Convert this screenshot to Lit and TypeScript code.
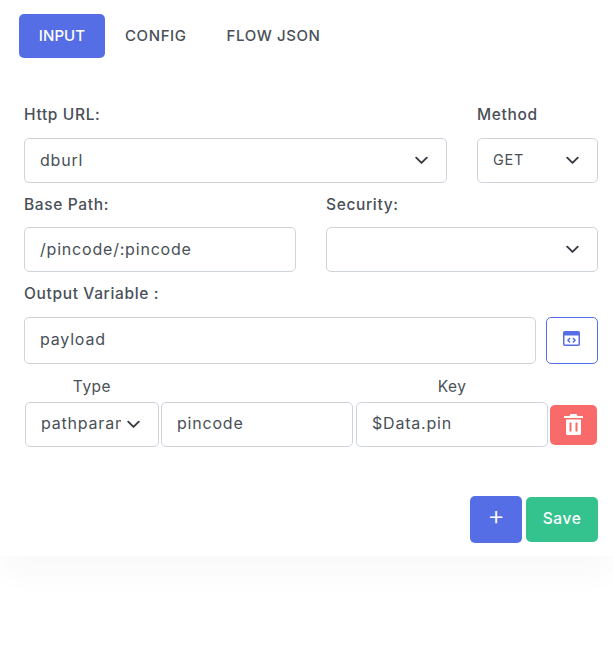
import { LitElement, html, css } from "lit";
import { customElement } from "lit/decorators.js";

const chevron = html`<svg class="chev" viewBox="0 0 16 16" width="13" height="13" fill="none" stroke="#343a40" stroke-width="2.300" stroke-linecap="round" stroke-linejoin="round"><path d="M1.500 4.500L8 11l6.500-6.500"/></svg>`;

@customElement("app-root")
export class AppRoot extends LitElement {
  static styles = css`
    :host { display: block; height: 667px; background: #fff; font-family: Inter, "Open Sans", sans-serif; color: #495057; font-size: 15px; }
    * { box-sizing: border-box; font-family: inherit; }
    .tabs { display: flex; padding: 14px 0 0 19px; height: 78px; align-items: flex-start; }
    .tab { height: 44px; padding: 0 20px 2px; display: flex; align-items: center; justify-content: center; border-radius: 5px; font-size: 15px; font-weight: 500; letter-spacing: .6px; color: #495057; background: none; border: 0; }
    .tab.active { background: #556ee6; color: #fff; width: 86px; padding: 0 0 2px; letter-spacing: .1px; }
    .card { height: 478px; padding: 25px 15px 0 24px; background: #fff; box-shadow: 0 20px 27px rgba(0,0,0,.025); }
    .row { display: grid; }
    .r1 { grid-template-columns: 1fr 121px; column-gap: 30px; }
    .r2 { grid-template-columns: 1fr 1fr; column-gap: 30px; margin-top: 10px; }
    .r3 { grid-template-columns: 1fr 52px; column-gap: 10px; margin-top: 10px; }
    label { display: block; height: 34px; font-size: 15.5px; font-weight: 450; letter-spacing: .65px; line-height: 24px; color: #495057; }
    .r1 label, .r3 label { height: 35px; }
    .field { display: flex; flex-direction: column; }
    input, select { display: block; width: 100%; height: 45px; border: 1px solid #ced4da; border-radius: 5px; background: #fff; padding: 0 15px 2px; font-size: 16px; color: #495057; letter-spacing: .8px; outline: none; appearance: none; -webkit-appearance: none; }
    .sel { position: relative; }
    .chev { position: absolute; right: 19px; top: 16px; pointer-events: none; }
    .sm select { font-size: 14.5px; letter-spacing: .7px; }
    input.tall { height: 47px; padding-bottom: 4px; }
    .code { height: 47px; border: 1px solid #556ee6; border-radius: 5px; background: #fff; display: flex; align-items: center; justify-content: center; padding: 0 1px 5px 0; }
    .heads { display: grid; grid-template-columns: 134px 2px 192px 3px 192px; margin: 10px 0 0 1px; height: 28px; text-align: center; font-size: 15.5px; line-height: 26px; letter-spacing: .5px; }
    .r4 { grid-template-columns: 134px 192px 192px 47px; column-gap: 2px; margin-left: 1px; align-items: center; }
    .r4 input, .r4 select { padding-bottom: 4px; }
    .r4 .k { margin-left: 1px; width: 192px; }
    .r4 select { padding-right: 37px; }
    .del { width: 47px; height: 40px; margin-left: 1px; background: #f96b6b; border: 0; border-radius: 5px; display: flex; align-items: center; justify-content: center; padding: 0; }
    .foot { display: flex; justify-content: flex-end; align-items: center; gap: 4px; margin-top: 49px; }
    .btn { border: 0; border-radius: 5px; color: #fff; padding: 0; display: flex; align-items: center; justify-content: center; }
    .plus { width: 52px; height: 47px; background: #556ee6; font-size: 27px; font-weight: 300; padding-bottom: 9px; }
    .save { width: 72px; height: 45px; background: #34c38f; font-size: 15.5px; font-weight: 500; letter-spacing: .6px; padding-bottom: 2px; }
  `;

  render() {
    return html`
      <div class="tabs">
        <button class="tab active">INPUT</button>
        <button class="tab">CONFIG</button>
        <button class="tab">FLOW JSON</button>
      </div>
      <div class="card">
        <div class="row r1">
          <div class="field"><label>Http URL:</label><div class="sel"><select><option>dburl</option></select>${chevron}</div></div>
          <div class="field"><label>Method</label><div class="sel sm"><select><option>GET</option></select>${chevron}</div></div>
        </div>
        <div class="row r2">
          <div class="field"><label>Base Path:</label><input value="/pincode/:pincode" /></div>
          <div class="field"><label>Security:</label><div class="sel"><select></select>${chevron}</div></div>
        </div>
        <div class="row r3">
          <div class="field"><label>Output Variable :</label><input class="tall" value="payload" /></div>
          <div class="field"><label></label>
            <button class="code" aria-label="Code">
              <svg viewBox="0 0 17 15" width="17" height="15"><rect x=".75" y=".75" width="15.500" height="13.500" rx="1" fill="none" stroke="#556ee6" stroke-width="1.500"/><rect x="1" y="1" width="15" height="3.500" fill="#556ee6"/><path fill="none" stroke="#556ee6" stroke-width="1.500" d="M7 7L5 9.250l2 2.250M10 7l2 2.250-2 2.250"/></svg>
            </button>
          </div>
        </div>
        <div class="heads"><span>Type</span><span></span><span></span><span></span><span>Key</span></div>
        <div class="row r4">
          <div class="sel"><select><option>pathparam</option></select>${chevron}</div>
          <input value="pincode" />
          <input class="k" value="$Data.pin" />
          <button class="del" aria-label="Delete">
            <svg viewBox="0 0 19 21" width="19" height="21"><path fill="#fff" d="M6.500 0h6l1 2H19v2H0V2h5.500zM2 5.500h15V19.500a1.500 1.500 0 0 1-1.500 1.500h-12A1.500 1.500 0 0 1 2 19.500z"/><path stroke="#f96b6b" stroke-width="2" d="M6.500 8.500v9M12.500 8.500v9"/></svg>
          </button>
        </div>
        <div class="foot">
          <button class="btn plus">+</button>
          <button class="btn save">Save</button>
        </div>
      </div>
    `;
  }
}
